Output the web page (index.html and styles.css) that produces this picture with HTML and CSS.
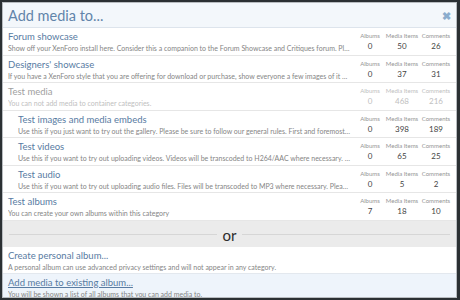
FILE: index.html
```html
<!DOCTYPE html>
<html lang="en">
<head>
<meta charset="UTF-8" />
<title>Add media to...</title>
<link rel="stylesheet" href="styles.css">
</head>
<body>

<div class="dialog">
<div class="dialog-header">
<h2>Add media to...</h2>
<span class="close">&#10006;</span>
</div>

<div class="row">
<div class="info">
<div class="title">Forum showcase</div>
<div class="desc">Show off your XenForo install here. Consider this a companion to the Forum Showcase and Critiques forum. Please be sure to read the rules first.</div>
</div>
<div class="stats">
<span class="label">Albums</span><span class="label">Media Items</span><span class="label">Comments</span>
<span class="num">0</span><span class="num">50</span><span class="num">26</span>
</div>
</div>

<div class="row">
<div class="info">
<div class="title">Designers' showcase</div>
<div class="desc">If you have a XenForo style that you are offering for download or purchase, show everyone a few images of it here and link to it.</div>
</div>
<div class="stats">
<span class="label">Albums</span><span class="label">Media Items</span><span class="label">Comments</span>
<span class="num">0</span><span class="num">37</span><span class="num">31</span>
</div>
</div>

<div class="row disabled">
<div class="info">
<div class="title">Test media</div>
<div class="desc">You can not add media to container categories.</div>
</div>
<div class="stats">
<span class="label">Albums</span><span class="label">Media Items</span><span class="label">Comments</span>
<span class="num">0</span><span class="num">468</span><span class="num">216</span>
</div>
</div>

<div class="row child">
<div class="info">
<div class="title">Test images and media embeds</div>
<div class="desc">Use this if you just want to try out the gallery. Please be sure to follow our general rules. First and foremost, this is a test area.</div>
</div>
<div class="stats">
<span class="label">Albums</span><span class="label">Media Items</span><span class="label">Comments</span>
<span class="num">0</span><span class="num">398</span><span class="num">189</span>
</div>
</div>

<div class="row child">
<div class="info">
<div class="title">Test videos</div>
<div class="desc">Use this if you want to try out uploading videos. Videos will be transcoded to H264/AAC where necessary. Please be patient.</div>
</div>
<div class="stats">
<span class="label">Albums</span><span class="label">Media Items</span><span class="label">Comments</span>
<span class="num">0</span><span class="num">65</span><span class="num">25</span>
</div>
</div>

<div class="row child">
<div class="info">
<div class="title">Test audio</div>
<div class="desc">Use this if you want to try out uploading audio files. Files will be transcoded to MP3 where necessary. Please be patient.</div>
</div>
<div class="stats">
<span class="label">Albums</span><span class="label">Media Items</span><span class="label">Comments</span>
<span class="num">0</span><span class="num">5</span><span class="num">2</span>
</div>
</div>

<div class="row">
<div class="info">
<div class="title">Test albums</div>
<div class="desc">You can create your own albums within this category</div>
</div>
<div class="stats">
<span class="label">Albums</span><span class="label">Media Items</span><span class="label">Comments</span>
<span class="num">7</span><span class="num">18</span><span class="num">10</span>
</div>
</div>

<div class="or-bar"><span>or</span></div>

<div class="option">
<div class="title">Create personal album...</div>
<div class="desc">A personal album can use advanced privacy settings and will not appear in any category.</div>
</div>

<div class="option selected">
<div class="title">Add media to existing album...</div>
<div class="desc">You will be shown a list of all albums that you can add media to.</div>
</div>
</div>

</body>
</html>
```

FILE: styles.css
```css
* {
box-sizing: border-box;
}

body {
margin: 0;
background-color: #2b3033;
font-family: Lato, sans-serif;
width: 460px;
height: 300px;
overflow: hidden;
}

.dialog {
margin: 2px 3px 0 2px;
height: 296px;
background-color: #fff;
border: 1px solid #b8bcc0;
overflow: hidden;
}

.dialog-header {
display: flex;
align-items: center;
justify-content: space-between;
height: 25px;
padding: 1px 5px 0 5px;
background-color: #f3f7fb;
border-bottom: 1px solid #dde4ec;
}

.dialog-header h2 {
margin: 0;
font-size: 14.5px;
font-weight: normal;
color: #6184aa;
}

.close {
font-size: 11px;
font-weight: bold;
color: #8aaccd;
}

.row {
display: flex;
align-items: center;
height: 27.5px;
padding: 1px 3px 0 5px;
border-bottom: 1px solid #e6e6e6;
}

.row.child {
padding-left: 15px;
}

.info {
flex: 1;
min-width: 0;
padding-right: 4px;
}

.title {
font-size: 9.5px;
line-height: 13px;
color: #587ba2;
white-space: nowrap;
}

.desc {
font-size: 7px;
line-height: 10px;
color: #858585;
white-space: nowrap;
overflow: hidden;
text-overflow: ellipsis;
}

.stats {
display: grid;
grid-template-columns: 30px 34px 34px;
row-gap: 1px;
text-align: center;
flex-shrink: 0;
}

.label {
font-size: 6px;
color: #959595;
line-height: 9px;
}

.num {
font-size: 8px;
color: #444;
line-height: 11px;
}

.disabled .title {
color: #a0a0a0;
}

.disabled .desc,
.disabled .label,
.disabled .num {
color: #c0c0c0;
}

.or-bar {
display: flex;
align-items: center;
gap: 6px;
height: 26px;
padding: 2px 6px 0;
background-color: #ebebeb;
}

.or-bar::before,
.or-bar::after {
content: "";
flex: 1;
border-top: 1px solid #d6d6d6;
}

.or-bar span {
font-size: 15px;
color: #2d2d2d;
line-height: 16px;
}

.option {
height: 27px;
padding: 2px 5px 0;
border-bottom: 1px solid #e3e8ee;
}

.option.selected {
background-color: #eef4fb;
border-bottom: none;
}

.option.selected .title {
text-decoration: underline;
}
```
